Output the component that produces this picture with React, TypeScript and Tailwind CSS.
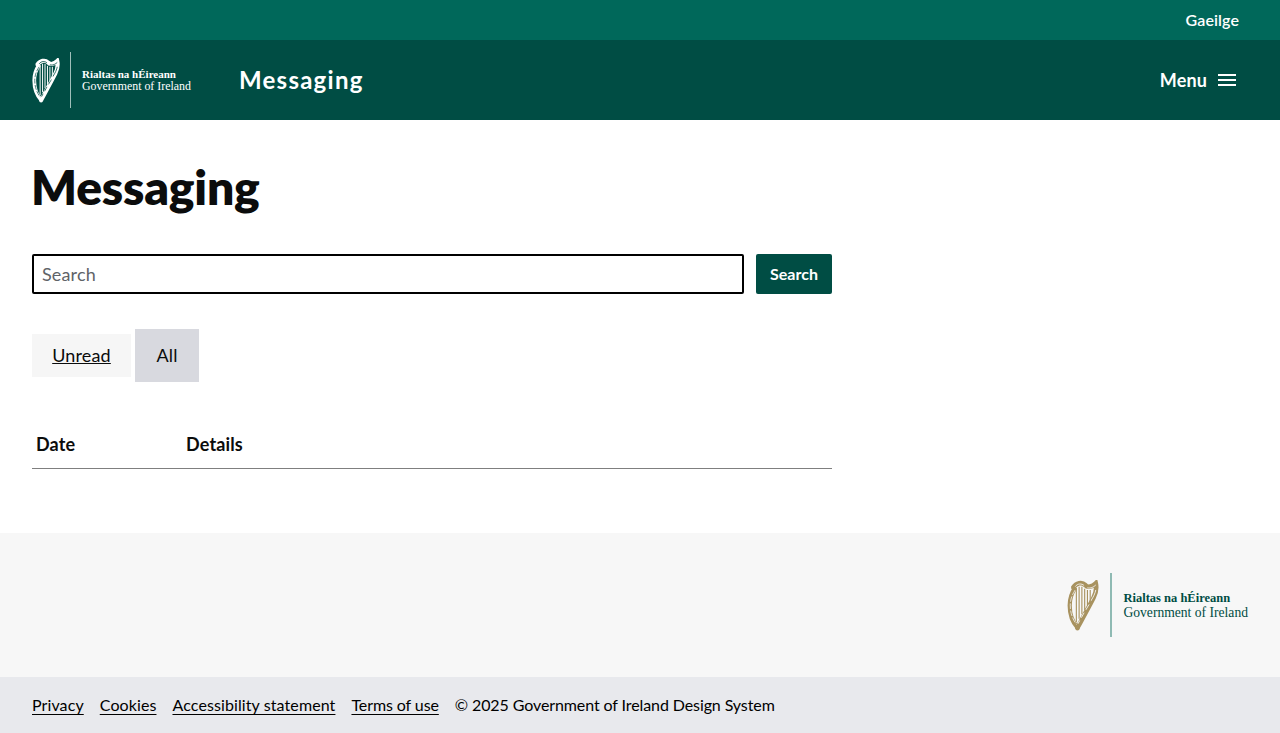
import React from "react";

function Harp({ color, bg, className }: { color: string; bg: string; className: string }) {
  return (
    <svg viewBox="0 0 28 46" fill="none" className={className}>
      {/* pillar */}
      <path d="M7 7 C3.5 12 2 17 2 23 C2 31 4.5 38 9 43" stroke={color} strokeWidth="3.8" />
      <path d="M7 9 C4 13.5 2.5 18 2.5 23 C2.5 30 5 36.5 9 41" stroke={bg} strokeWidth="0.7" strokeDasharray="5 1.5" />
      {/* neck */}
      <path d="M5 7 C8 2.5 13 1.5 16 4.5 C18 7 22 6.5 25.5 3 C26.5 7.5 26 11 23.5 16 C20 23 15 32 9 43" stroke={color} strokeWidth="4.2" />
      <path d="M7 6 C9 3 13 3 15 5 M18 7 C21 8 24 6 25.5 4.5 M25.5 9 C25 12 23.5 15 21 19 M19.5 22 L16.5 27 M15 29.5 L12.5 34 M11 36.5 L9.5 39.5" stroke={bg} strokeWidth="0.8" />
      {/* strings */}
      <path d="M8 7 L8 38 M10.5 6 L10.5 35 M13 6 L13 31 M15.5 8 L15.5 27 M18 9 L18 23 M20.5 9 L20.5 19" stroke={color} strokeWidth="1" />
      {/* base */}
      <circle cx="9" cy="43.5" r="2" fill={color} />
      <circle cx="5" cy="7" r="1.8" fill={color} />
    </svg>
  );
}

function Logo({ dark }: { dark?: boolean }) {
  if (dark) {
    return (
      <div className="flex items-center">
        <Harp color="#a8925f" bg="#f7f7f7" className="h-[51px] w-[32px]" />
        <div className="ml-[11px] h-[64px] w-[2px] bg-[#8fbab3]" />
        <div className="ml-[11px] font-['Liberation_Serif',serif] text-[#004d44]">
          <div className="pt-px -mb-px text-[12.5px] leading-[15px] font-bold">Rialtas na hÉireann</div>
          <div className="text-[13.6px] leading-[15px] whitespace-nowrap">Government of Ireland</div>
        </div>
      </div>
    );
  }
  return (
    <div className="flex items-center">
      <Harp color="#ffffff" bg="#004d44" className="h-[45px] w-[28px]" />
      <div className="ml-[10px] h-[56px] w-px bg-[#9fbfba]" />
      <div className="ml-[11px] font-['Liberation_Serif',serif] text-white">
        <div className="pt-px -mb-px text-[11px] leading-[13px] font-bold">Rialtas na hÉireann</div>
        <div className="text-[11.9px] leading-[13px] whitespace-nowrap">Government of Ireland</div>
      </div>
    </div>
  );
}

export default function App() {
  return (
    <div className="min-h-[733px] flex flex-col bg-white font-['Lato',sans-serif] text-[#0b0c0c]">
      <div className="h-10 bg-[#00685a] flex items-center justify-end pr-[41px]">
        <a className="text-white text-base font-semibold tracking-[0.1px]">Gaeilge</a>
      </div>
      <header className="h-20 bg-[#004d44] flex items-center justify-between pl-8 pr-[44px]">
        <div className="flex items-center">
          <Logo />
          <span className="ml-12 text-white text-2xl font-bold tracking-[1.25px]">Messaging</span>
        </div>
        <button className="flex items-center text-white text-lg font-bold tracking-[0.15px]">
          Menu
          <svg viewBox="0 0 18 12" className="ml-[11px] h-3 w-[18px]" fill="white">
            <rect y="0" width="18" height="2" />
            <rect y="5" width="18" height="2" />
            <rect y="10" width="18" height="2" />
          </svg>
        </button>
      </header>
      <main className="h-[413px] px-8">
        <h1 className="mt-[35px] -ml-px text-[48px] leading-[64px] font-extrabold tracking-[-0.2px]">Messaging</h1>
        <div className="mt-[35px] w-[800px] flex gap-3">
          <input
            placeholder="Search"
            className="h-10 flex-1 border-2 border-black rounded-[2px] px-2 text-lg tracking-[0.15px] placeholder:text-[#5f6368] outline-none"
          />
          <button className="h-10 w-[76px] rounded-[2px] bg-[#004d44] text-white text-base font-bold">Search</button>
        </div>
        <div className="mt-[35px] flex items-center gap-1">
          <a className="h-[43px] w-[99px] justify-center pb-[2px] flex items-center bg-[#f6f6f6] text-lg tracking-[0.15px] underline">Unread</a>
          <span className="h-[53px] w-16 justify-center pb-[2px] flex items-center bg-[#d8d9df] text-lg tracking-[0.15px]">All</span>
        </div>
        <div className="mt-[40px] w-[800px] h-[47px] border-b border-[#7f7f7f] flex items-center pb-[2px] text-lg font-bold tracking-[0.15px]">
          <span className="ml-1 w-[150px]">Date</span>
          <span>Details</span>
        </div>
      </main>
      <div className="h-[144px] bg-[#f7f7f7] flex items-center justify-end pr-8">
        <Logo dark />
      </div>
      <footer className="h-14 bg-[#e8e9ed] flex items-center gap-4 px-8 text-base text-black">
        <a className="underline underline-offset-[3px] tracking-[0.1px]">Privacy</a>
        <a className="underline underline-offset-[3px] tracking-[0.1px]">Cookies</a>
        <a className="underline underline-offset-[3px] tracking-[0.1px]">Accessibility statement</a>
        <a className="underline underline-offset-[3px] tracking-[-0.1px]">Terms of use</a>
        <span className="tracking-[-0.1px]">© 2025 Government of Ireland Design System</span>
      </footer>
    </div>
  );
}
